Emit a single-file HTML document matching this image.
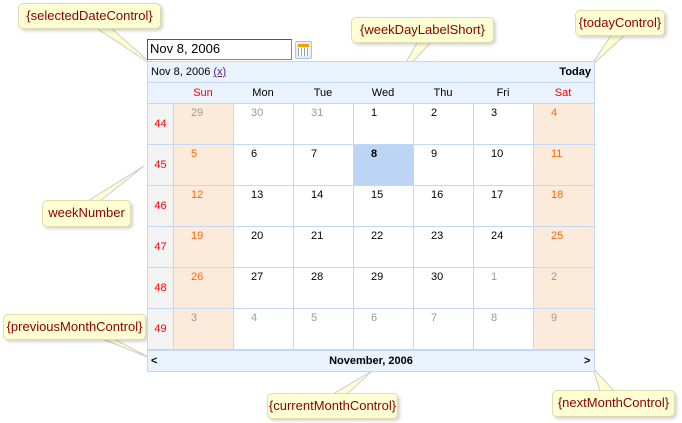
<!DOCTYPE html>
<html><head><meta charset="utf-8"><style>
body{margin:0;width:682px;height:423px;background:#fff;position:relative;overflow:hidden;font-family:"Liberation Sans",sans-serif;font-size:11px}
div{position:absolute;box-sizing:border-box}
.call{background:#ffffd4;border:1px solid #ddddb0;border-radius:5px;box-shadow:2px 2px 3px rgba(0,0,0,.18);color:#8b0000;font-size:13px;text-align:center;line-height:24px;font-family:"Liberation Sans",sans-serif}
.c{width:60px;height:41px;border-left:1px solid #c3d8f5;border-bottom:1px solid #c3d8f5;padding:3px 0 0 17px;color:#000}
.w{left:147px;width:26px;height:41px;background:#f3f3f3;border-left:1px solid #c3d8f5;border-bottom:1px solid #c3d8f5;color:#f00;text-align:center;line-height:41px}
.we{background:#fceadb;color:#f60}
.g{color:#999}
.hd{top:82px;height:22px;line-height:22px;text-align:center;width:60px}
</style></head><body>
<svg width="682" height="423" style="position:absolute;left:0;top:0">
<polygon points="95,27 110,27 155,67" fill="#ffffd4" stroke="#ccc"/>
<polygon points="418,41 432,41 396,80" fill="#ffffd4" stroke="#ccc"/>
<polygon points="612,34 626,34 590,67" fill="#ffffd4" stroke="#ccc"/>
<polygon points="88,201 100,201 144,166" fill="#ffffd4" stroke="#ccc"/>
<polygon points="100,338 112,338 150,358" fill="#ffffd4" stroke="#ccc"/>
<polygon points="333,394 347,394 372,371" fill="#ffffd4" stroke="#ccc"/>
<polygon points="600,391 614,391 593,368" fill="#ffffd4" stroke="#ccc"/>
</svg>
<div class="call" style="left:18px;top:3px;width:143px;height:26px">{selectedDateControl}</div>
<div class="call" style="left:351px;top:17px;width:143px;height:26px">{weekDayLabelShort}</div>
<div class="call" style="left:575px;top:10px;width:90px;height:26px">{todayControl}</div>
<div class="call" style="left:42px;top:200px;width:89px;height:27px">weekNumber</div>
<div class="call" style="left:3px;top:314px;width:143px;height:26px">{previousMonthControl}</div>
<div class="call" style="left:267px;top:393px;width:131px;height:26px">{currentMonthControl}</div>
<div class="call" style="left:552px;top:390px;width:123px;height:27px">{nextMonthControl}</div>

<div style="left:147px;top:39px;width:145px;height:21px;border:1px solid #888;border-top-color:#555;border-left-color:#555;font-size:13px;padding:1px 0 0 2px">Nov 8, 2006</div>
<div style="left:295px;top:41px;width:17px;height:18px;border:1px solid #a9c4e8;border-radius:2px;background:#e6eefa"><div style="left:2px;top:2px;width:11px;height:3px;background:#f0a000"></div><div style="left:2px;top:6px;width:11px;height:8px;background:repeating-linear-gradient(90deg,#8aa 0 1px,#fff 1px 3px)"></div></div>

<div style="left:147px;top:61px;width:448px;height:311px;border:1px solid #c3d8f5"></div>
<div style="left:147px;top:61px;width:448px;height:43px;background:#eaf2fd;border:1px solid #c3d8f5"></div>
<div style="left:148px;top:82px;width:446px;height:1px;background:#c3d8f5"></div>
<div style="left:151px;top:64px;line-height:16px">Nov 8, 2006 <span style="color:#551a8b;text-decoration:underline">(x)</span></div>
<div style="left:540px;top:64px;width:51px;text-align:right;font-weight:bold;line-height:16px">Today</div>
<div class="hd" style="left:173px;color:#f00">Sun</div><div class="hd" style="left:233px">Mon</div><div class="hd" style="left:293px">Tue</div><div class="hd" style="left:353px">Wed</div><div class="hd" style="left:413px">Thu</div><div class="hd" style="left:473px">Fri</div><div class="hd" style="left:533px;color:#f00">Sat</div>

<div class="w" style="top:104px">44</div><div class="w" style="top:145px">45</div><div class="w" style="top:186px">46</div><div class="w" style="top:227px">47</div><div class="w" style="top:268px">48</div><div class="w" style="top:309px">49</div>

<div class="c we g" style="left:173px;top:104px;color:#999">29</div><div class="c g" style="left:233px;top:104px">30</div><div class="c g" style="left:293px;top:104px">31</div><div class="c" style="left:353px;top:104px">1</div><div class="c" style="left:413px;top:104px">2</div><div class="c" style="left:473px;top:104px">3</div><div class="c we" style="left:533px;top:104px;width:61px">4</div>
<div class="c we" style="left:173px;top:145px">5</div><div class="c" style="left:233px;top:145px">6</div><div class="c" style="left:293px;top:145px">7</div><div class="c" style="left:353px;top:145px;background:#bcd5f5;font-weight:bold">8</div><div class="c" style="left:413px;top:145px">9</div><div class="c" style="left:473px;top:145px">10</div><div class="c we" style="left:533px;top:145px;width:61px">11</div>
<div class="c we" style="left:173px;top:186px">12</div><div class="c" style="left:233px;top:186px">13</div><div class="c" style="left:293px;top:186px">14</div><div class="c" style="left:353px;top:186px">15</div><div class="c" style="left:413px;top:186px">16</div><div class="c" style="left:473px;top:186px">17</div><div class="c we" style="left:533px;top:186px;width:61px">18</div>
<div class="c we" style="left:173px;top:227px">19</div><div class="c" style="left:233px;top:227px">20</div><div class="c" style="left:293px;top:227px">21</div><div class="c" style="left:353px;top:227px">22</div><div class="c" style="left:413px;top:227px">23</div><div class="c" style="left:473px;top:227px">24</div><div class="c we" style="left:533px;top:227px;width:61px">25</div>
<div class="c we" style="left:173px;top:268px">26</div><div class="c" style="left:233px;top:268px">27</div><div class="c" style="left:293px;top:268px">28</div><div class="c" style="left:353px;top:268px">29</div><div class="c" style="left:413px;top:268px">30</div><div class="c g" style="left:473px;top:268px">1</div><div class="c we g" style="left:533px;top:268px;width:61px;color:#999">2</div>
<div class="c we g" style="left:173px;top:309px;color:#999">3</div><div class="c g" style="left:233px;top:309px">4</div><div class="c g" style="left:293px;top:309px">5</div><div class="c g" style="left:353px;top:309px">6</div><div class="c g" style="left:413px;top:309px">7</div><div class="c g" style="left:473px;top:309px">8</div><div class="c we g" style="left:533px;top:309px;width:61px;color:#999">9</div>

<div style="left:147px;top:350px;width:448px;height:22px;background:#eaf2fd;border:1px solid #c3d8f5;line-height:20px;font-weight:bold;text-align:center">November, 2006</div>
<div style="left:151px;top:351px;line-height:20px;font-weight:bold">&lt;</div>
<div style="left:584px;top:351px;line-height:20px;font-weight:bold">&gt;</div>
</body></html>
